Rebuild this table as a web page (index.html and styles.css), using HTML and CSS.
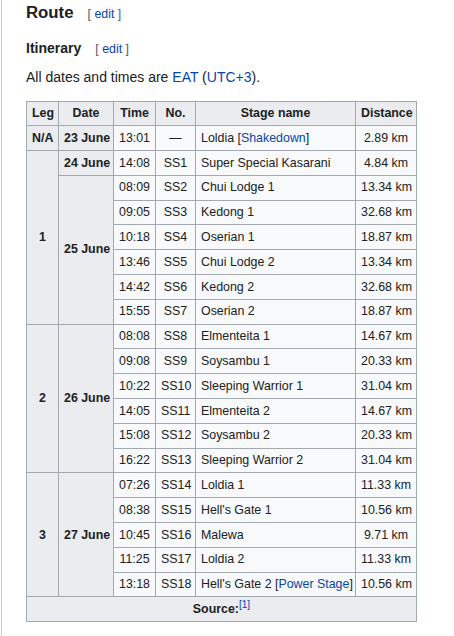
FILE: index.html
```html
<!DOCTYPE html>
<html lang="en">
<head>
<meta charset="utf-8">
<title>Route</title>
<link rel="stylesheet" href="styles.css">
</head>
<body>
<div class="page">
  <h3 class="h3">Route<span class="editsection">[ <a href="#">edit</a> ]</span></h3>
  <h4 class="h4">Itinerary<span class="editsection">[ <a href="#">edit</a> ]</span></h4>
  <p class="intro">All dates and times are <a href="#">EAT</a> (<a href="#">UTC+3</a>).</p>
  <table class="wikitable">
    <colgroup>
      <col class="c-leg"><col class="c-date"><col class="c-time"><col class="c-no"><col class="c-name"><col class="c-dist">
    </colgroup>
    <thead>
      <tr><th>Leg</th><th>Date</th><th>Time</th><th>No.</th><th>Stage name</th><th>Distance</th></tr>
    </thead>
    <tbody>
      <tr><th>N/A</th><th>23 June</th><td class="ctr">13:01</td><td class="ctr">—</td><td>Loldia [<a href="#">Shakedown</a>]</td><td class="ctr">2.89 km</td></tr>
      <tr><th rowspan="7">1</th><th>24 June</th><td class="ctr">14:08</td><td class="ctr">SS1</td><td>Super Special Kasarani</td><td class="ctr">4.84 km</td></tr>
      <tr><th rowspan="6">25 June</th><td class="ctr">08:09</td><td class="ctr">SS2</td><td>Chui Lodge 1</td><td class="ctr">13.34 km</td></tr>
      <tr><td class="ctr">09:05</td><td class="ctr">SS3</td><td>Kedong 1</td><td class="ctr">32.68 km</td></tr>
      <tr><td class="ctr">10:18</td><td class="ctr">SS4</td><td>Oserian 1</td><td class="ctr">18.87 km</td></tr>
      <tr><td class="ctr">13:46</td><td class="ctr">SS5</td><td>Chui Lodge 2</td><td class="ctr">13.34 km</td></tr>
      <tr><td class="ctr">14:42</td><td class="ctr">SS6</td><td>Kedong 2</td><td class="ctr">32.68 km</td></tr>
      <tr><td class="ctr">15:55</td><td class="ctr">SS7</td><td>Oserian 2</td><td class="ctr">18.87 km</td></tr>
      <tr><th rowspan="6">2</th><th rowspan="6">26 June</th><td class="ctr">08:08</td><td class="ctr">SS8</td><td>Elmenteita 1</td><td class="ctr">14.67 km</td></tr>
      <tr><td class="ctr">09:08</td><td class="ctr">SS9</td><td>Soysambu 1</td><td class="ctr">20.33 km</td></tr>
      <tr><td class="ctr">10:22</td><td class="ctr">SS10</td><td>Sleeping Warrior 1</td><td class="ctr">31.04 km</td></tr>
      <tr><td class="ctr">14:05</td><td class="ctr">SS11</td><td>Elmenteita 2</td><td class="ctr">14.67 km</td></tr>
      <tr><td class="ctr">15:08</td><td class="ctr">SS12</td><td>Soysambu 2</td><td class="ctr">20.33 km</td></tr>
      <tr><td class="ctr">16:22</td><td class="ctr">SS13</td><td>Sleeping Warrior 2</td><td class="ctr">31.04 km</td></tr>
      <tr><th rowspan="5">3</th><th rowspan="5">27 June</th><td class="ctr">07:26</td><td class="ctr">SS14</td><td>Loldia 1</td><td class="ctr">11.33 km</td></tr>
      <tr><td class="ctr">08:38</td><td class="ctr">SS15</td><td>Hell's Gate 1</td><td class="ctr">10.56 km</td></tr>
      <tr><td class="ctr">10:45</td><td class="ctr">SS16</td><td>Malewa</td><td class="ctr">9.71 km</td></tr>
      <tr><td class="ctr">11:25</td><td class="ctr">SS17</td><td>Loldia 2</td><td class="ctr">11.33 km</td></tr>
      <tr><td class="ctr">13:18</td><td class="ctr">SS18</td><td>Hell's Gate 2 [<a href="#">Power Stage</a>]</td><td class="ctr">10.56 km</td></tr>
    </tbody>
    <tfoot>
      <tr><th colspan="6">Source:<sup class="ref"><a href="#">[1]</a></sup></th></tr>
    </tfoot>
  </table>
</div>
</body>
</html>
```
FILE: styles.css
```css
html, body {
  margin: 0;
  padding: 0;
  background: #ffffff;
}
body {
  font-family: "Liberation Sans", Arial, sans-serif;
  color: #202122;
  font-size: 14px;
}
a {
  color: #0645ad;
  text-decoration: none;
}
.page {
  margin-left: 1px;
  border-left: 1px solid #a7d7f9;
  padding-left: 24px;
  min-height: 636px;
}
.h3 {
  margin: 0;
  font-size: 16.8px;
  font-weight: bold;
  line-height: 25px;
}
.h4 {
  margin: 10px 0 0;
  font-size: 14px;
  font-weight: bold;
  line-height: 22px;
}
.editsection {
  font-weight: normal;
  font-size: 12.4px;
  color: #54595d;
  margin-left: 14px;
}
.intro {
  margin: 6px 0 0;
  line-height: 22px;
}
.wikitable {
  margin-top: 12.5px;
  border-collapse: collapse;
  border: 1px solid #a2a9b1;
  background: #f8f9fa;
  color: #202122;
  table-layout: fixed;
  width: 391px;
  font-size: 12.4px;
}
.c-leg { width: 32px; }
.c-date { width: 55px; }
.c-time { width: 42px; }
.c-no { width: 40px; }
.c-name { width: 160px; }
.c-dist { width: 61px; }
.wikitable th,
.wikitable td {
  border: 1px solid #a2a9b1;
  padding: 2.5px 5px;
  line-height: 18.8px;
  white-space: nowrap;
}
.wikitable th {
  background: #eaecf0;
  text-align: center;
  font-weight: bold;
}
.wikitable td {
  text-align: left;
}
.wikitable td.ctr {
  text-align: center;
}
.ref {
  font-size: 10px;
  line-height: 1;
  vertical-align: super;
  font-weight: normal;
}
```
